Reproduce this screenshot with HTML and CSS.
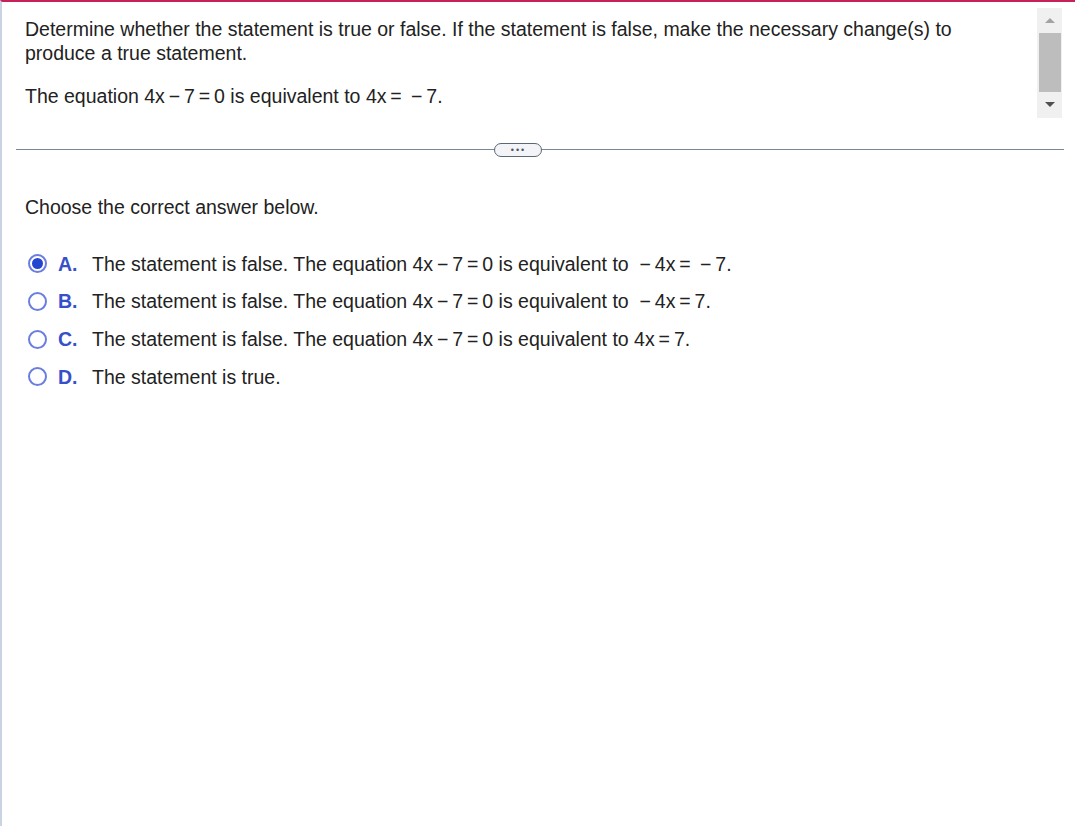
FILE: index.html
```html
<!DOCTYPE html>
<html lang="en">
  <head>
    <meta charset="UTF-8" />
    <title>Question</title>
    <link rel="stylesheet" href="styles.css">
  </head>
  <body>
    <div class="frame">
      <section class="question">
        <div class="question-text">
          <p>
            Determine whether the statement is true or false. If the statement is false, make the necessary change(s) to
            produce a true statement.
          </p>
          <p>The equation <span class="math">4x&#8201;&minus;&#8201;7&#8201;=&#8201;0</span> is equivalent to <span class="math">4x&#8201;=&#8201; &minus;&#8201;7</span>.</p>
        </div>
        <div class="scrollbar">
          <span class="arrow up"></span>
          <span class="thumb"></span>
          <span class="arrow down"></span>
        </div>
      </section>

      <div class="divider">
        <span class="more">&bull;&bull;&bull;</span>
      </div>

      <section class="answers">
        <p class="prompt">Choose the correct answer below.</p>
        <ul class="choices">
          <li class="choice selected">
            <span class="radio"></span>
            <span class="letter">A.</span>
            <span>The statement is false. The equation <span class="math">4x&#8201;&minus;&#8201;7&#8201;=&#8201;0</span> is equivalent to <span class="math">&nbsp;&minus;&#8201;4x&#8201;=&#8201; &minus;&#8201;7</span>.</span>
          </li>
          <li class="choice">
            <span class="radio"></span>
            <span class="letter">B.</span>
            <span>The statement is false. The equation <span class="math">4x&#8201;&minus;&#8201;7&#8201;=&#8201;0</span> is equivalent to <span class="math">&nbsp;&minus;&#8201;4x&#8201;=&#8201;7</span>.</span>
          </li>
          <li class="choice">
            <span class="radio"></span>
            <span class="letter">C.</span>
            <span>The statement is false. The equation <span class="math">4x&#8201;&minus;&#8201;7&#8201;=&#8201;0</span> is equivalent to <span class="math">4x&#8201;=&#8201;7</span>.</span>
          </li>
          <li class="choice">
            <span class="radio"></span>
            <span class="letter">D.</span>
            <span>The statement is true.</span>
          </li>
        </ul>
      </section>
    </div>
  </body>
</html>
```

FILE: styles.css
```css
* {
  box-sizing: border-box;
}

:root {
  --text-color: #222;
  --accent: #3550c8;
  --line-color: #7a8898;
}

html,
body {
  margin: 0;
  height: 100%;
}

body {
  font-family: "Liberation Sans", Arial, sans-serif;
  font-size: 19.5px;
  color: var(--text-color);
  background: #fff;
}

.frame {
  height: 100%;
  border-top: 2px solid #c8205a;
  border-left: 2px solid #c9d3e3;
}

.question {
  display: flex;
  justify-content: space-between;
  height: 147px;
  padding: 6px 13px 0 23px;
}

.question-text {
  max-width: 940px;
}

.question-text p {
  margin: 0 0 19px;
  line-height: 24px;
}

.question-text p:first-child {
  margin-top: 9px;
}

.scrollbar {
  display: flex;
  flex-direction: column;
  align-items: center;
  width: 25px;
  height: 110px;
  background: #f0f0f0;
  flex-shrink: 0;
}

.arrow {
  width: 0;
  height: 0;
  border-left: 5px solid transparent;
  border-right: 5px solid transparent;
}

.arrow.up {
  margin: 10px 0 10px;
  border-bottom: 5px solid #a3a3a3;
}

.arrow.down {
  margin: 10px 0 0;
  border-top: 5px solid #505050;
}

.thumb {
  width: 22px;
  height: 59px;
  background: #bdbdbd;
}

.divider {
  display: flex;
  justify-content: center;
  align-items: center;
  height: 1px;
  margin: 0 11px 0 14px;
  background: var(--line-color);
}

.more {
  width: 48px;
  height: 14px;
  margin-right: 45px;
  border: 1px solid #5b6776;
  border-radius: 7px;
  background: #f2f4f7;
  color: #4a5461;
  font-size: 9px;
  line-height: 12px;
  letter-spacing: 2px;
  text-align: center;
  padding-left: 2px;
}

.answers {
  padding: 45px 23px 0;
}

.prompt {
  margin: 0 0 26px;
  line-height: 24px;
}

.choices {
  list-style: none;
  margin: 0;
  padding: 0;
}

.choice {
  display: flex;
  align-items: center;
  height: 37.67px;
  line-height: 24px;
}

.radio {
  width: 19px;
  height: 19px;
  margin: 0 11px 0 3px;
  border: 2px solid #6a7ee0;
  border-radius: 50%;
  display: flex;
  align-items: center;
  justify-content: center;
  flex-shrink: 0;
}

.choice.selected .radio::after {
  content: "";
  width: 11px;
  height: 11px;
  border-radius: 50%;
  background: #2346d0;
}

.letter {
  width: 34px;
  color: var(--accent);
  font-weight: bold;
}
```
